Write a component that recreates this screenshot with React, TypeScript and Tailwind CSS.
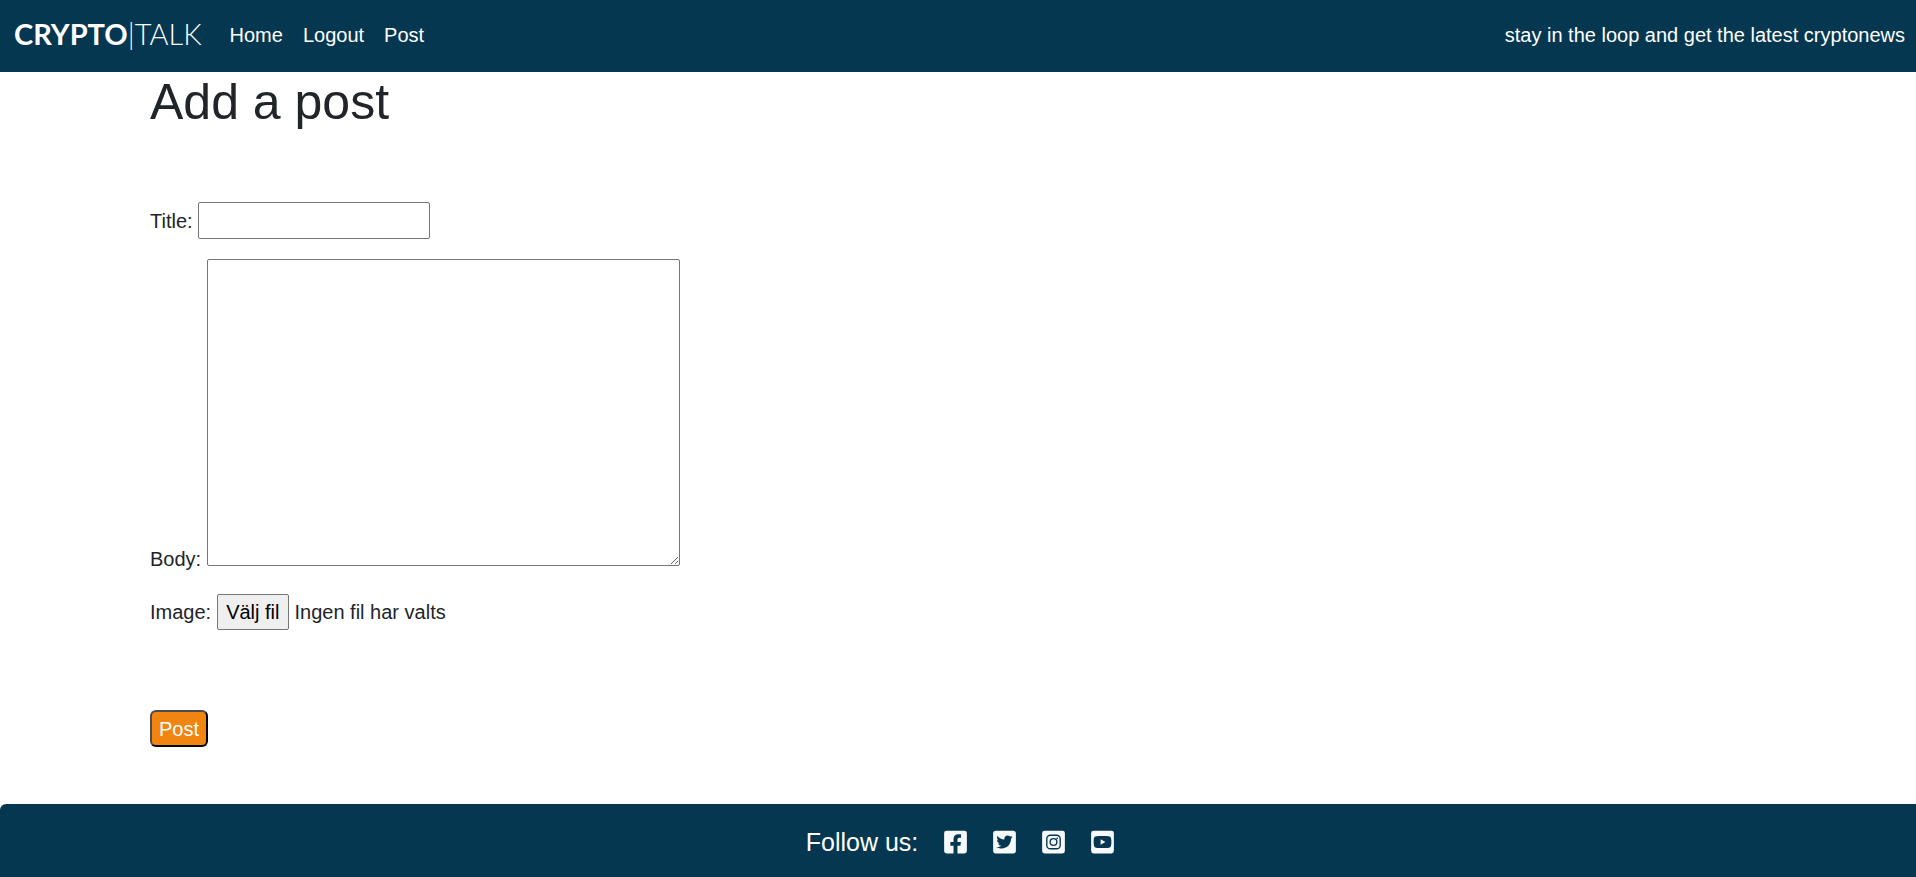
import React, { useRef, useState } from "react";
import { FaFacebookSquare, FaTwitterSquare } from "react-icons/fa";

const navLinks = ["Home", "Logout", "Post"];

function InstagramSquare({ className }: { className?: string }) {
  return (
    <svg viewBox="0 0 448 512" className={className} aria-hidden="true">
      <rect y="32" width="448" height="448" rx="48" fill="currentColor" />
      <g fill="none" stroke="#063750" strokeWidth="27">
        <rect x="92" y="124" width="264" height="264" rx="70" />
        <circle cx="224" cy="256" r="66" />
      </g>
      <circle cx="297" cy="184" r="17" fill="#063750" />
    </svg>
  );
}

function YoutubeSquare({ className }: { className?: string }) {
  return (
    <svg viewBox="0 0 448 512" className={className} aria-hidden="true">
      <rect y="32" width="448" height="448" rx="48" fill="currentColor" />
      <path
        fill="#063750"
        d="M224 136c-60 0-108 3-128 8-20 5-34 18-40 38-9 40-9 108 0 148 6 20 20 33 40 38 20 5 68 8 128 8s108-3 128-8c20-5 34-18 40-38 9-40 9-108 0-148-6-20-20-33-40-38-20-5-68-8-128-8z"
      />
      <path fill="currentColor" d="M187 202l95 54-95 54z" />
    </svg>
  );
}

const socials = [
  { name: "Facebook", Icon: FaFacebookSquare },
  { name: "Twitter", Icon: FaTwitterSquare },
  { name: "Instagram", Icon: InstagramSquare },
  { name: "YouTube", Icon: YoutubeSquare },
];

function Header() {
  return (
    <header className="flex h-18 items-center bg-[#063750] pr-[11px] pb-[2px] pl-[14px] text-white">
      <a href="#" className="mr-7 pb-[2px] font-[Lato,sans-serif] text-[29px] leading-10 font-bold">
        CRYPTO<span className="font-light">|TALK</span>
      </a>
      <nav className="flex gap-5">
        {navLinks.map((label) => (
          <a key={label} href="#">
            {label}
          </a>
        ))}
      </nav>
      <p className="ml-auto">stay in the loop and get the latest cryptonews</p>
    </header>
  );
}

function PostForm() {
  const fileInput = useRef<HTMLInputElement>(null);
  const [fileName, setFileName] = useState("Ingen fil har valts");

  return (
    <form onSubmit={(event) => event.preventDefault()}>
      <div className="flex items-center gap-[5px]">
        <label htmlFor="title">Title:</label>
        <input
          id="title"
          type="text"
          className="h-[37px] w-[232px] rounded-xs border border-[#767676] bg-white px-1"
        />
      </div>
      <div className="mt-5 flex items-end gap-[6px]">
        <label htmlFor="body" className="-mb-2">
          Body:
        </label>
        <textarea
          id="body"
          className="h-[307px] w-[473px] resize rounded-xs border border-[#767676] bg-white p-1"
        />
      </div>
      <div className="mt-7 flex items-center gap-[6px]">
        <label htmlFor="image">Image:</label>
        <input
          ref={fileInput}
          id="image"
          type="file"
          className="sr-only"
          onChange={(event) => setFileName(event.target.files?.[0]?.name ?? "Ingen fil har valts")}
        />
        <button
          type="button"
          onClick={() => fileInput.current?.click()}
          className="h-9 rounded-xs border border-[#767676] bg-[#efefef] px-2 leading-8 text-black"
        >
          Välj fil
        </button>
        <span>{fileName}</span>
      </div>
      <button
        type="submit"
        className="mt-20 h-[37px] rounded-md border-2 border-t-[#4c4c4c] border-r-black border-b-black border-l-[#4c4c4c] bg-[#f28410] px-[7px] leading-8 text-white"
      >
        Post
      </button>
    </form>
  );
}

function Footer() {
  return (
    <footer className="mt-auto flex h-[73px] items-center justify-center gap-[26px] rounded-tl-md bg-[#063750] pt-[2px] pl-1 text-[25px] text-white">
      <p>Follow us:</p>
      <ul className="flex gap-[26px]">
        {socials.map(({ name, Icon }) => (
          <li key={name}>
            <a href="#" aria-label={name} className="block text-[#f8f9fa]">
              <Icon className="h-[26px] w-[23px]" />
            </a>
          </li>
        ))}
      </ul>
    </footer>
  );
}

export default function App() {
  return (
    <div className="flex min-h-screen flex-col bg-white font-['Liberation_Sans',Arial,sans-serif] text-xl leading-[30px] text-[#212529]">
      <Header />
      <main className="px-[150px] pb-14">
        <h1 className="mb-[70px] text-[50px] leading-[60px]">Add a post</h1>
        <PostForm />
      </main>
      <Footer />
    </div>
  );
}
